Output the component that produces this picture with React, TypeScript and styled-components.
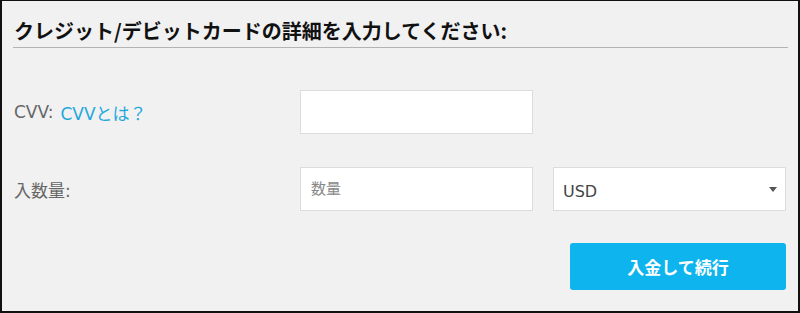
import styled, { createGlobalStyle } from "styled-components";

const GlobalStyle = createGlobalStyle`
  html, body {
    margin: 0;
    padding: 0;
    background: #f1f1f1;
  }
  * {
    box-sizing: border-box;
  }
`;

const Panel = styled.div`
  width: 800px;
  height: 313px;
  background: #f1f1f1;
  border: 2px solid #111;
  border-top-width: 1px;
  font-family: "DejaVu Sans", "Noto Sans CJK JP", sans-serif;
`;

const Heading = styled.h2`
  margin: 0 10px 0 11px;
  padding: 16px 0 2px 1px;
  font-family: "Noto Sans CJK JP", sans-serif;
  font-size: 20px;
  line-height: 28px;
  font-weight: 700;
  color: #111;
  border-bottom: 1px solid #b3b3b3;
`;

const Form = styled.form`
  display: flex;
  flex-direction: column;
  gap: 33px;
  padding: 42px 12px 0 12px;
`;

const Row = styled.div`
  display: grid;
  grid-template-columns: 266px 233px 233px;
  column-gap: 20px;
  align-items: center;
`;

const Label = styled.label`
  font-size: 17px;
  color: #666;
  display: flex;
  align-items: center;
  gap: 7px;
`;

const HelpLink = styled.a`
  color: #23a8de;
  text-decoration: none;
  cursor: pointer;
`;

const Input = styled.input`
  height: 44px;
  width: 100%;
  background: #fff;
  border: 1px solid #dcdcdc;
  padding: 0 10px;
  font-family: "DejaVu Sans", "Noto Sans CJK JP", sans-serif;
  font-size: 15px;
  color: #333;
  outline: none;

  &::placeholder {
    color: #888;
  }
`;

const SelectWrap = styled.div`
  position: relative;
  height: 44px;
`;

const Select = styled.select`
  appearance: none;
  width: 100%;
  height: 100%;
  background: #fff;
  border: 1px solid #dcdcdc;
  border-radius: 0;
  padding: 4px 10px 0 9px;
  font-family: "DejaVu Sans", "Noto Sans CJK JP", sans-serif;
  font-size: 16px;
  color: #444;
  outline: none;
`;

const Caret = styled.span`
  position: absolute;
  right: 9px;
  top: 20px;
  width: 0;
  height: 0;
  border-left: 4px solid transparent;
  border-right: 4px solid transparent;
  border-top: 5px solid #555;
  pointer-events: none;
`;

const Actions = styled.div`
  display: flex;
  justify-content: flex-end;
  margin-top: -1px;
`;

const SubmitButton = styled.button`
  width: 216px;
  height: 47px;
  background: #0db4ee;
  border: none;
  border-radius: 3px;
  color: #fff;
  font-family: "Noto Sans CJK JP", sans-serif;
  font-size: 17px;
  font-weight: 700;
  cursor: pointer;
`;

export default function App() {
  return (
    <>
      <GlobalStyle />
      <Panel>
        <Heading>クレジット/デビットカードの詳細を入力してください:</Heading>
        <Form onSubmit={(e) => e.preventDefault()}>
          <Row>
            <Label>
              <span>CVV:</span>
              <HelpLink>CVVとは？</HelpLink>
            </Label>
            <Input type="text" />
          </Row>
          <Row>
            <Label>入数量:</Label>
            <Input type="text" placeholder="数量" />
            <SelectWrap>
              <Select defaultValue="USD">
                <option value="USD">USD</option>
                <option value="EUR">EUR</option>
                <option value="JPY">JPY</option>
              </Select>
              <Caret />
            </SelectWrap>
          </Row>
          <Actions>
            <SubmitButton type="submit">入金して続行</SubmitButton>
          </Actions>
        </Form>
      </Panel>
    </>
  );
}
